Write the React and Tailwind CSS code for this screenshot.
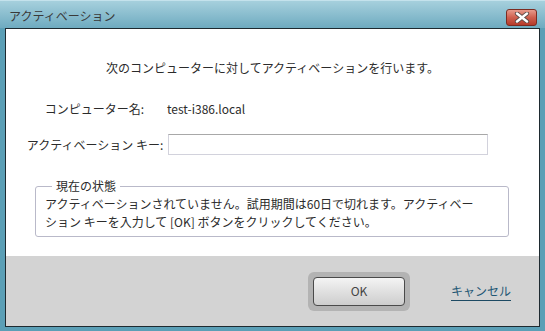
import React from "react";

const font = { fontFamily: '"Noto Sans CJK JP", "Noto Sans", sans-serif' };

function CloseX() {
  return (
    <svg width="16" height="11" viewBox="0 0 16 11">
      <path d="M3 1.5 L13 9.5 M13 1.5 L3 9.5" stroke="#5a4a48" strokeWidth="4.2" strokeLinecap="round" fill="none" />
      <path d="M3 1.5 L13 9.5 M13 1.5 L3 9.5" stroke="#ffffff" strokeWidth="2.4" strokeLinecap="round" fill="none" />
    </svg>
  );
}

export default function App() {
  return (
    <div
      className="w-[545px] h-[331px] flex flex-col bg-[#5b9fb6] border-t border-[#c4e2ec] text-[12px] text-[#2b2b2b]"
      style={font}
    >
      <div className="h-[27px] flex items-center justify-between pl-[9px] pr-[8px] bg-gradient-to-b from-[#a6d0dd] to-[#6eabc0]">
        <span className="text-[12px] leading-[14px] text-[#3a3a3a] mt-[2px]">アクティベーション</span>
        <div className="w-[31px] h-[17px] mt-[6px] rounded-[3px] border border-[#7b2c22] bg-gradient-to-b from-[#e79a8c] via-[#cf5f4e] to-[#b53a2a] flex items-center justify-center">
          <CloseX />
        </div>
      </div>
      <div className="mx-[5px] h-[299px] border border-[#1e2a30] flex flex-col">
        <div className="h-[227px] bg-white flex flex-col">
          <div className="pt-[30px] leading-[17px] text-center">次のコンピューターに対してアクティベーションを行います。</div>
          <div className="mt-[24px] grid grid-cols-[161px_1fr] items-center leading-[17px]">
            <div className="text-center pl-[16px]">コンピューター名:</div>
            <div>test-i386.local</div>
          </div>
          <div className="mt-[17px] grid grid-cols-[162px_320px] items-center">
            <div className="text-center pl-[16px] leading-[17px]">アクティベーション キー:</div>
            <div className="h-[21px] border border-[#d2d2dc] border-t-[#a8a8a8] bg-white"></div>
          </div>
          <fieldset className="mt-[25px] ml-[29px] w-[474px] border border-[#b9b9c9] rounded-[3px] pl-[9px] pb-[6px]">
            <legend className="ml-[7px] px-[4px] leading-[12px]">現在の状態</legend>
            <div className="mt-[4px] leading-[16px]">
              アクティベーションされていません。試用期間は60日で切れます。アクティベー
            </div>
            <div className="mt-[2px] leading-[16px]">
              ション キーを入力して [OK] ボタンをクリックしてください。
            </div>
          </fieldset>
        </div>
        <div className="flex-1 bg-[#d3d3d3] flex items-center justify-end pr-[28px] gap-[41px]">
          <div className="p-[5px] rounded-[6px] bg-[#b3b3b3]">
            <div className="w-[92px] h-[29px] rounded-[4px] border border-[#4a4a4a] bg-gradient-to-b from-[#f4f4f4] to-[#cdcdcd] flex items-center justify-center text-[#444]">
              OK
            </div>
          </div>
          <div className="text-[#1f5775] border-b border-[#1d4a63] leading-[16px] pb-[1px] mt-[1px]">キャンセル</div>
        </div>
      </div>
      <div className="flex-1"></div>
    </div>
  );
}
